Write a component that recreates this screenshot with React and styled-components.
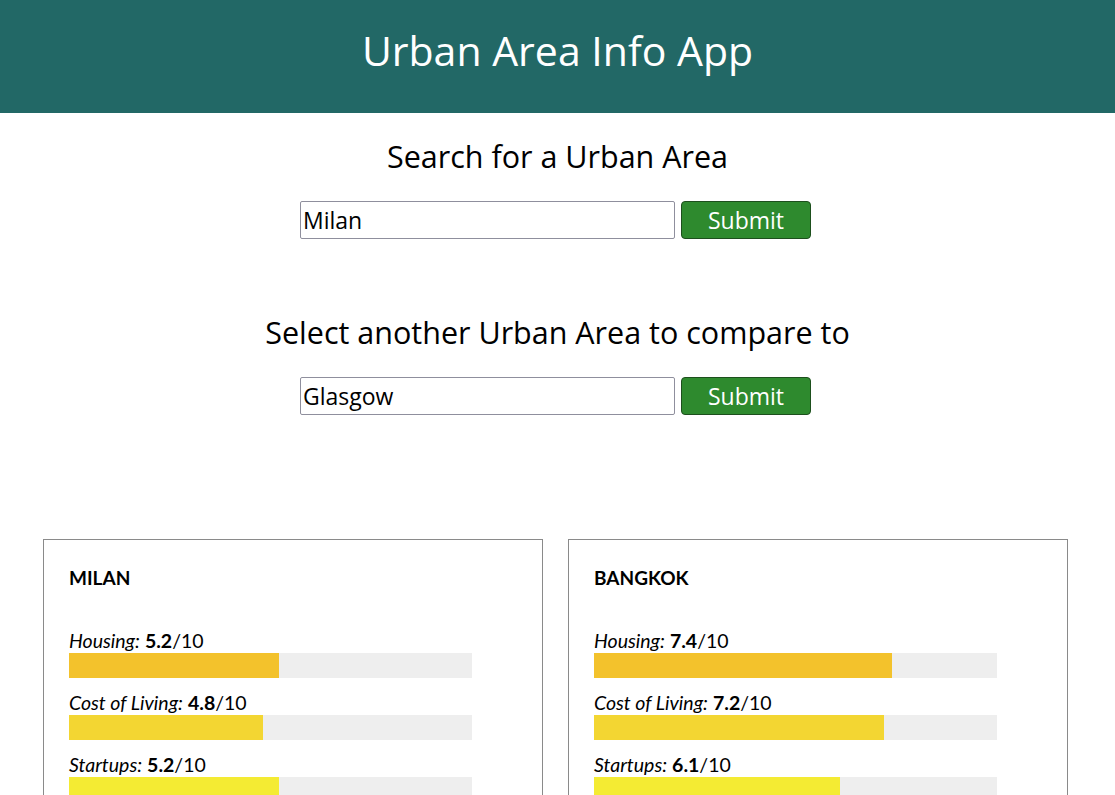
import React from 'react'
import styled, { createGlobalStyle } from 'styled-components'

const milan = {
    name: 'Milan',
    scores: [
        { label: 'Housing', value: 5.2, color: '#f3c22c' },
        { label: 'Cost of Living', value: 4.8, color: '#f3d632' },
        { label: 'Startups', value: 5.2, color: '#f4eb33' },
        { label: 'Venture Capital', value: 4.1, color: '#d2ed31' },
        { label: 'Travel Connectivity', value: 5.5, color: '#7adc29' },
    ],
}

const bangkok = {
    name: 'Bangkok',
    scores: [
        { label: 'Housing', value: 7.4, color: '#f3c22c' },
        { label: 'Cost of Living', value: 7.2, color: '#f3d632' },
        { label: 'Startups', value: 6.1, color: '#f4eb33' },
        { label: 'Venture Capital', value: 3.6, color: '#d2ed31' },
        { label: 'Travel Connectivity', value: 4.7, color: '#7adc29' },
    ],
}

function SearchForm({ title, value }) {
    return (
        <Section>
            <Heading>{title}</Heading>
            <Form onSubmit={e => e.preventDefault()}>
                <Input type='text' defaultValue={value} />
                <Button type='submit'>Submit</Button>
            </Form>
        </Section>
    )
}

function CityCard({ city }) {
    return (
        <Card>
            <CardTitle>{city.name}</CardTitle>
            {city.scores.map(s => (
                <Score key={s.label}>
                    <ScoreLabel>
                        <em>{s.label}:</em> <b>{s.value}</b>/10
                    </ScoreLabel>
                    <Track>
                        <Fill color={s.color} style={{ width: `${s.value * 10}%` }} />
                    </Track>
                </Score>
            ))}
        </Card>
    )
}

function App() {
    return (
        <>
            <GlobalStyle />
            <Header>
                <Title>Urban Area Info App</Title>
            </Header>
            <SearchForm title='Search for a Urban Area' value='Milan' />
            <SearchForm title='Select another Urban Area to compare to' value='Glasgow' />
            <Cards>
                <CityCard city={milan} />
                <CityCard city={bangkok} />
            </Cards>
        </>
    )
}

export default App

const GlobalStyle = createGlobalStyle`
    html, body {
        overflow: hidden;
    }
    body {
        margin: 0;
        font-family: "Open Sans", "DejaVu Sans", sans-serif;
        color: #000;
        background: #fff;
    }
`
const Header = styled.header`
    height: 113px;
    display: flex;
    align-items: center;
    justify-content: center;
    background-color: #226866;
    color: white;
`
const Title = styled.h1`
    margin: 0 0 14px;
    font-size: 41px;
    font-weight: 400;
    line-height: 50px;
`
const Section = styled.section`
    display: flex;
    flex-direction: column;
    align-items: center;
    margin-top: 25px;
    & + & {
        margin-top: 75px;
    }
`
const Heading = styled.h2`
    margin: 0 0 27px;
    font-size: 30.5px;
    font-weight: 400;
    line-height: 36px;
`
const Form = styled.form`
    display: flex;
    gap: 6px;
    margin-right: 4px;
`
const Input = styled.input`
    box-sizing: border-box;
    width: 375px;
    height: 38px;
    padding: 0 2px;
    border: 1px solid #8f8f9d;
    border-radius: 2px;
    font-family: inherit;
    font-size: 23px;
    color: #000;
    outline: 0;
`
const Button = styled.button`
    box-sizing: border-box;
    width: 130px;
    height: 38px;
    background-color: #2e8a2e;
    border: 1px solid #1d4f1d;
    border-radius: 4px;
    color: white;
    font-family: inherit;
    font-size: 23px;
    cursor: pointer;
`
const Cards = styled.div`
    display: flex;
    gap: 25px;
    padding: 0 43px;
    margin-top: 124px;
`
const Card = styled.div`
    box-sizing: border-box;
    width: 500px;
    padding: 22px 25px 20px;
    border: 1px solid #8a8a8a;
    font-family: "Lato", "Open Sans", sans-serif;
`
const CardTitle = styled.h3`
    margin: 0 0 34px;
    font-size: 19px;
    font-weight: 700;
    line-height: 32px;
    text-transform: uppercase;
`
const Score = styled.div`
    margin-bottom: 12px;
`
const ScoreLabel = styled.div`
    font-size: 19.5px;
    line-height: 25px;
    em {
        font-style: italic;
    }
    b {
        font-weight: 700;
    }
`
const Track = styled.div`
    width: 90%;
    height: 25px;
    background-color: #eeeeee;
`
const Fill = styled.div`
    height: 100%;
    background-color: ${props => props.color};
`
